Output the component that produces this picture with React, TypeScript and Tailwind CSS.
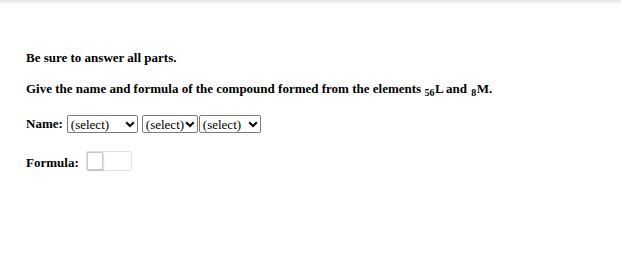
import React from "react";

const serif = { fontFamily: '"Liberation Serif", "Times New Roman", serif' };

function Chevron() {
  return (
    <svg width="10" height="7" viewBox="0 0 10 7" className="shrink-0">
      <path d="M1.2 1.3 L5 5 L8.8 1.3" fill="none" stroke="#000" strokeWidth="2" />
    </svg>
  );
}

function FakeSelect({ w, gapCls }: { w: string; gapCls: string }) {
  return (
    <div
      className={`h-[18px] ${w} border border-[#7a7a7a] rounded-[2px] bg-white flex items-center pl-[3px] pr-[2px] text-[13px] font-normal leading-none`}
      style={serif}
    >
      <span>(select)</span>
      <span className={gapCls} />
      <Chevron />
    </div>
  );
}

export default function App() {
  return (
    <div className="w-[621px] h-[262px] bg-white overflow-hidden text-black" style={serif}>
      <div className="h-[5px] bg-gradient-to-b from-[#e4e4e4] to-white" />
      <div className="pl-[26px] pt-[45px] text-[13px] font-bold leading-[16px]">
        <p>Be sure to answer all parts.</p>
        <p className="mt-[15px]">
          Give the name and formula of the compound formed from the elements{" "}
          <span className="relative top-[3px] text-[10px] mr-[0.5px]">56</span>L and{" "}
          <span className="relative top-[3px] text-[10px] ml-[1px] mr-[0.5px]">8</span>M.
        </p>
        <div className="mt-[17px] flex items-center">
          <span className="mr-[4px]">Name:</span>
          <FakeSelect w="w-[71px]" gapCls="flex-1" />
          <div className="w-[4px]" />
          <FakeSelect w="w-[56px]" gapCls="w-[1px]" />
          <div className="w-[1px]" />
          <FakeSelect w="w-[62px]" gapCls="flex-1" />
        </div>
        <div className="mt-[18px] flex items-end">
          <span className="mr-[7px]">Formula:</span>
          <div className="w-[46px] h-[20px] border border-[#e2e2e2] rounded-[2px] flex items-end">
            <div className="w-[16px] h-[18px] border border-[#c9c9c9] bg-white shadow-[1px_1px_1px_rgba(0,0,0,0.12)]" />
          </div>
        </div>
      </div>
    </div>
  );
}
